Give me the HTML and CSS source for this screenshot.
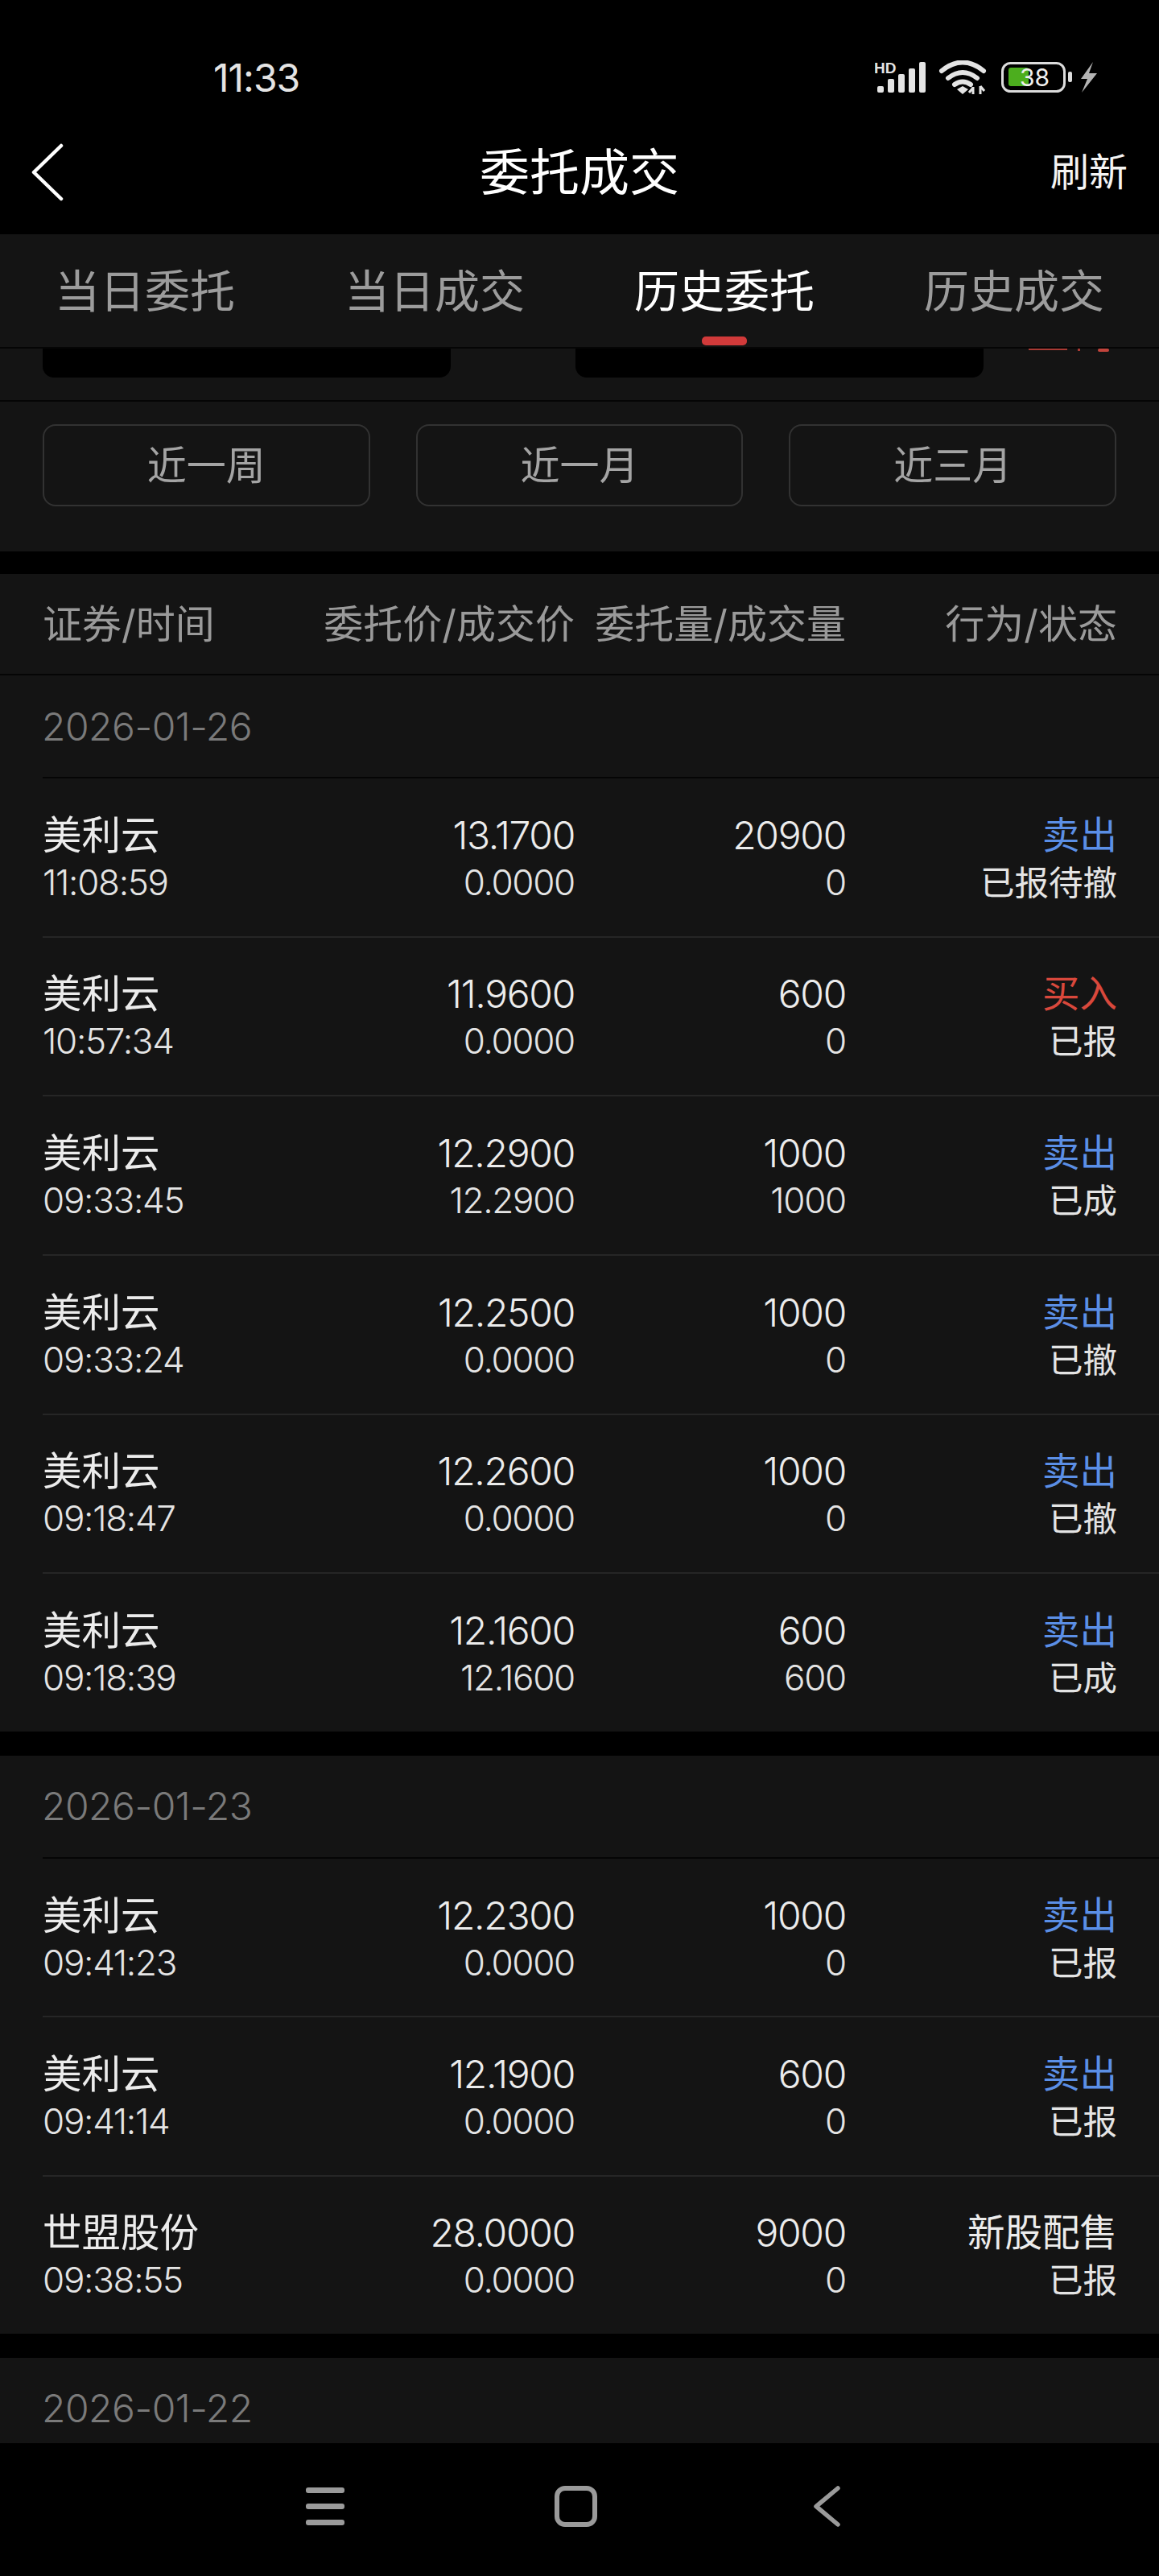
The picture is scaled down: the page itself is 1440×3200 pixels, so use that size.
FILE: index.html
```html
<!DOCTYPE html>
<html lang="zh-CN">
<head>
  <meta charset="UTF-8" />
  <title>委托成交</title>
  <link rel="stylesheet" href="styles.css">
</head>
<body>
  <div class="status-bar">
    <span class="clock">11:33</span>
    <svg class="status-icons" width="276" height="42" viewBox="1087 75 276 42">
      <text x="1086" y="91" class="hd">HD</text>
      <rect x="1090" y="107" width="8" height="8" rx="2" fill="#e4e4e4"/>
      <rect x="1103" y="98" width="8" height="17" rx="2" fill="#e4e4e4"/>
      <rect x="1116" y="92" width="8" height="23" rx="2" fill="#e4e4e4"/>
      <rect x="1129" y="85" width="8" height="30" rx="2" fill="#e4e4e4"/>
      <rect x="1142" y="77" width="8" height="38" rx="2" fill="#e4e4e4"/>
      <g fill="none" stroke="#e4e4e4" stroke-width="6" stroke-linecap="round">
        <path d="M1170 88 Q1196 67 1222 88"/>
        <path d="M1178 97 Q1196 83 1214 97"/>
        <path d="M1186 105 Q1196 98 1206 105"/>
      </g>
      <path d="M1189 111 L1196 107 L1203 111 L1196 117 Z" fill="#e4e4e4"/>
      <path d="M1209 108 V117 M1209 109 L1204 115 M1218 117 V107 M1218 107 L1223 113" fill="none" stroke="#e4e4e4" stroke-width="3"/>
      <rect x="1245.5" y="78.5" width="77" height="35" rx="10" fill="none" stroke="#dcdcdc" stroke-width="3"/>
      <rect x="1253" y="84" width="25" height="23" rx="3" fill="#4cae1e"/>
      <text x="1267" y="107" class="batt">38</text>
      <rect x="1327" y="89" width="5" height="13" rx="2" fill="#dcdcdc"/>
      <path d="M1358 77 L1343 98 H1351 L1344 115 L1363 91 H1353 Z" fill="#b4b4b4"/>
    </svg>
  </div>

  <div class="nav-bar">
    <svg class="back" width="40" height="72" viewBox="0 0 40 72">
      <path d="M37 3 L3 36 L37 69" fill="none" stroke="#fff" stroke-width="4.5" stroke-linecap="round" stroke-linejoin="round"/>
    </svg>
    <h1 class="title">委托成交</h1>
    <span class="refresh">刷新</span>
  </div>

  <div class="tabs">
    <div class="tab">当日委托</div>
    <div class="tab">当日成交</div>
    <div class="tab active">历史委托</div>
    <div class="tab">历史成交</div>
  </div>

  <div class="filter-cut">
    <div class="cut-card"></div>
    <div class="cut-card"></div>
    <svg class="cut-red" width="100" height="4" viewBox="0 0 100 4">
      <rect x="0" y="0" width="48" height="2" fill="#a83a34"/>
      <rect x="61" y="0" width="3" height="3" fill="#a83a34"/>
      <rect x="86" y="0" width="14" height="4" rx="2" fill="#c2443c"/>
    </svg>
  </div>

  <div class="presets">
    <div class="preset">近一周</div>
    <div class="preset">近一月</div>
    <div class="preset">近三月</div>
  </div>

  <div class="col-head grid">
    <span>证券/时间</span>
    <span class="r">委托价/成交价</span>
    <span class="r">委托量/成交量</span>
    <span class="r">行为/状态</span>
  </div>

  <section class="group first">
    <div class="date">2026-01-26</div>
    <div class="row grid">
      <div><p class="l1 name">美利云</p><p class="l2">11:08:59</p></div>
      <div class="r"><p class="l1">13.1700</p><p class="l2">0.0000</p></div>
      <div class="r"><p class="l1">20900</p><p class="l2">0</p></div>
      <div class="r"><p class="l1 act sell">卖出</p><p class="l2 state">已报待撤</p></div>
    </div>
    <div class="row grid">
      <div><p class="l1 name">美利云</p><p class="l2">10:57:34</p></div>
      <div class="r"><p class="l1">11.9600</p><p class="l2">0.0000</p></div>
      <div class="r"><p class="l1">600</p><p class="l2">0</p></div>
      <div class="r"><p class="l1 act buy">买入</p><p class="l2 state">已报</p></div>
    </div>
    <div class="row grid">
      <div><p class="l1 name">美利云</p><p class="l2">09:33:45</p></div>
      <div class="r"><p class="l1">12.2900</p><p class="l2">12.2900</p></div>
      <div class="r"><p class="l1">1000</p><p class="l2">1000</p></div>
      <div class="r"><p class="l1 act sell">卖出</p><p class="l2 state">已成</p></div>
    </div>
    <div class="row grid">
      <div><p class="l1 name">美利云</p><p class="l2">09:33:24</p></div>
      <div class="r"><p class="l1">12.2500</p><p class="l2">0.0000</p></div>
      <div class="r"><p class="l1">1000</p><p class="l2">0</p></div>
      <div class="r"><p class="l1 act sell">卖出</p><p class="l2 state">已撤</p></div>
    </div>
    <div class="row grid">
      <div><p class="l1 name">美利云</p><p class="l2">09:18:47</p></div>
      <div class="r"><p class="l1">12.2600</p><p class="l2">0.0000</p></div>
      <div class="r"><p class="l1">1000</p><p class="l2">0</p></div>
      <div class="r"><p class="l1 act sell">卖出</p><p class="l2 state">已撤</p></div>
    </div>
    <div class="row grid">
      <div><p class="l1 name">美利云</p><p class="l2">09:18:39</p></div>
      <div class="r"><p class="l1">12.1600</p><p class="l2">12.1600</p></div>
      <div class="r"><p class="l1">600</p><p class="l2">600</p></div>
      <div class="r"><p class="l1 act sell">卖出</p><p class="l2 state">已成</p></div>
    </div>
  </section>

  <section class="group">
    <div class="date">2026-01-23</div>
    <div class="row grid">
      <div><p class="l1 name">美利云</p><p class="l2">09:41:23</p></div>
      <div class="r"><p class="l1">12.2300</p><p class="l2">0.0000</p></div>
      <div class="r"><p class="l1">1000</p><p class="l2">0</p></div>
      <div class="r"><p class="l1 act sell">卖出</p><p class="l2 state">已报</p></div>
    </div>
    <div class="row grid">
      <div><p class="l1 name">美利云</p><p class="l2">09:41:14</p></div>
      <div class="r"><p class="l1">12.1900</p><p class="l2">0.0000</p></div>
      <div class="r"><p class="l1">600</p><p class="l2">0</p></div>
      <div class="r"><p class="l1 act sell">卖出</p><p class="l2 state">已报</p></div>
    </div>
    <div class="row grid">
      <div><p class="l1 name">世盟股份</p><p class="l2">09:38:55</p></div>
      <div class="r"><p class="l1">28.0000</p><p class="l2">0.0000</p></div>
      <div class="r"><p class="l1">9000</p><p class="l2">0</p></div>
      <div class="r"><p class="l1 act">新股配售</p><p class="l2 state">已报</p></div>
    </div>
  </section>

  <section class="group last">
    <div class="date">2026-01-22</div>
  </section>

  <div class="sys-nav">
    <svg width="48" height="47" viewBox="0 0 48 47">
      <rect x="0" y="0" width="48" height="7" rx="3" fill="#9a9a9a"/>
      <rect x="0" y="20" width="48" height="7" rx="3" fill="#9a9a9a"/>
      <rect x="0" y="40" width="48" height="7" rx="3" fill="#9a9a9a"/>
    </svg>
    <svg width="53" height="51" viewBox="0 0 53 51">
      <rect x="3" y="3" width="47" height="45" rx="10" fill="none" stroke="#9a9a9a" stroke-width="6"/>
    </svg>
    <svg class="nav-back" width="34" height="51" viewBox="0 0 34 51">
      <path d="M31 3 L4 25.5 L31 48" fill="none" stroke="#9a9a9a" stroke-width="5.5" stroke-linecap="round" stroke-linejoin="round"/>
    </svg>
  </div>
</body>
</html>
```

FILE: styles.css
```css
* {
  margin: 0;
  padding: 0;
  box-sizing: border-box;
}

body {
  background: #000;
  width: 1440px;
  height: 3200px;
  overflow: hidden;
  color: #e8e8e8;
  font-family: Inter, "Noto Sans CJK SC", sans-serif;
  font-weight: 400;
  font-size: 49px;
}

.status-bar {
  height: 137px;
  display: flex;
  justify-content: space-between;
  align-items: center;
  padding: 55px 77px 0 265px;
}

.clock {
  font-size: 48px;
  font-weight: 400;
  letter-spacing: -1px;
  color: #e4e4e4;
}

.hd {
  font-family: "Liberation Sans", sans-serif;
  font-size: 19px;
  font-weight: 700;
  fill: #e4e4e4;
}

.batt {
  font-size: 30px;
  font-weight: 400;
  fill: #f0f0f0;
}

.nav-bar {
  height: 154px;
  display: flex;
  justify-content: space-between;
  align-items: center;
  padding: 0 39px;
  position: relative;
}

.title {
  position: absolute;
  left: 0;
  right: 0;
  padding-bottom: 8px;
  text-align: center;
  font-size: 62px;
  font-weight: 400;
  color: #fff;
}

.refresh {
  padding-bottom: 8px;
  font-size: 48px;
  color: #f4f4f4;
}

.tabs {
  height: 140px;
  background: #141414;
  display: grid;
  grid-template-columns: repeat(4, 360px);
}

.tab {
  position: relative;
  display: flex;
  justify-content: center;
  align-items: center;
  padding-bottom: 8px;
  font-size: 56px;
  color: #9c9c9c;
}

.tab.active {
  color: #fff;
}

.tab.active::after {
  content: "";
  position: absolute;
  left: 152px;
  bottom: 2px;
  width: 56px;
  height: 11px;
  border-radius: 5px;
  background: #d13a3a;
}

.filter-cut {
  height: 68px;
  background: #141414;
  border-top: 2px solid #050505;
  border-bottom: 2px solid #050505;
  padding-left: 53px;
  display: flex;
  gap: 155px;
  position: relative;
}

.cut-card {
  width: 507px;
  height: 36px;
  background: #000;
  border-radius: 0 0 14px 14px;
}

.cut-red {
  position: absolute;
  left: 1278px;
  top: 0;
}

.presets {
  height: 186px;
  background: #141414;
  display: grid;
  grid-template-columns: repeat(3, 1fr);
  gap: 57px;
  padding: 28px 53px 56px;
}

.preset {
  border: 2px solid #323232;
  border-radius: 16px;
  display: flex;
  justify-content: center;
  align-items: center;
  padding-bottom: 8px;
  color: #a4a4a4;
}

.grid {
  display: grid;
  grid-template-columns: 341px 320px 337px 337px;
  padding: 0 52px 0 53px;
}

.r {
  text-align: right;
}

.col-head {
  margin-top: 28px;
  height: 126px;
  background-color: #141414;
  border-bottom: 2px solid #050505;
  align-items: center;
  padding-bottom: 8px;
  color: #9a9a9a;
  white-space: nowrap;
}

.group {
  background: #141414;
}

.group + .group {
  margin-top: 30px;
}

.group.last {
  height: 106px;
}

.date {
  height: 126px;
  padding: 0 52px;
  display: flex;
  align-items: center;
  font-size: 48px;
  font-weight: 300;
  letter-spacing: -0.5px;
  color: #7a7a7a;
}

.row {
  height: 197.33px;
  align-content: center;
  padding-top: 6px;
  position: relative;
}

.group.first .row {
  height: 197.67px;
}

.row::before {
  content: "";
  position: absolute;
  left: 53px;
  right: 0;
  top: 0;
  height: 2px;
  background: #262626;
}

.group .date + .row::before {
  background: #050505;
}

.l1 {
  line-height: 59px;
  font-size: 48px;
  font-weight: 300;
  letter-spacing: -1.3px;
  color: #ececec;
  white-space: nowrap;
}

.l2 {
  line-height: 59px;
  font-size: 44px;
  font-weight: 300;
  letter-spacing: -1.3px;
  color: #e4e4e4;
  white-space: nowrap;
}

.name {
  font-size: 48.5px;
  font-weight: 400;
  letter-spacing: 0;
}

.act {
  font-size: 46.5px;
  font-weight: 400;
  letter-spacing: 0;
}

.state {
  font-size: 42.5px;
  font-weight: 400;
  letter-spacing: 0;
}

.sell {
  color: #5b8fe6;
}

.buy {
  color: #d9483c;
}

.sys-nav {
  height: 165px;
  display: flex;
  align-items: center;
  gap: 261px;
  padding: 0 0 8px 380px;
}

.nav-back {
  margin-left: 7px;
}
```
